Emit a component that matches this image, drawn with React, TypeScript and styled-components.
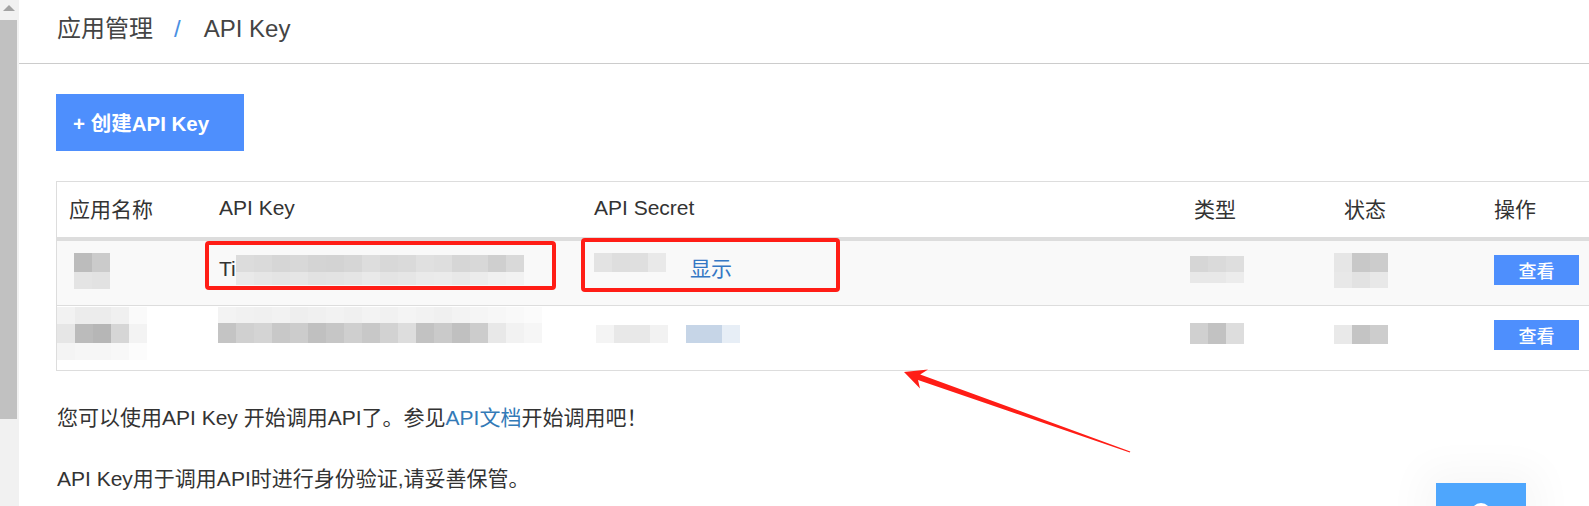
import React from "react";
import styled, { createGlobalStyle } from "styled-components";

const GlobalStyle = createGlobalStyle`
  html, body {
    margin: 0;
    padding: 0;
    background: #ffffff;
    overflow: hidden;
  }
  body {
    font-family: "Liberation Sans", Arial, "Noto Sans CJK SC", sans-serif;
    color: #333333;
  }
  * { box-sizing: border-box; }
`;

const Page = styled.div`
  position: relative;
  display: flex;
  width: 1589px;
  height: 506px;
  overflow: hidden;
  background: #ffffff;
`;

const ScrollStrip = styled.div`
  flex: none;
  width: 19px;
  height: 100%;
  background: #f1f1f1;
  display: flex;
  flex-direction: column;
`;

const ScrollArrow = styled.div`
  height: 20px;
  width: 17px;
  display: flex;
  align-items: center;
  justify-content: center;
  padding-bottom: 5px;
  &::before {
    content: "";
    border-left: 6px solid transparent;
    border-right: 6px solid transparent;
    border-bottom: 6px solid #a3a3a3;
  }
`;

const ScrollThumb = styled.div`
  width: 17px;
  height: 399px;
  background: #c1c1c1;
`;

const Main = styled.div`
  flex: 1;
  min-width: 0;
  display: flex;
  flex-direction: column;
`;

const Header = styled.div`
  height: 64px;
  border-bottom: 1px solid #cccccc;
  padding: 0 0 6px 38px;
  display: flex;
  align-items: center;
  font-size: 24px;
  color: #444444;
`;

const Crumb = styled.span`
  line-height: 30px;
`;

const CrumbSep = styled.span`
  color: #4a90e2;
  margin: 0 23px 0 21px;
  line-height: 30px;
`;

const Content = styled.div`
  padding: 30px 0 0 37px;
  display: flex;
  flex-direction: column;
  align-items: flex-start;
`;

const CreateButton = styled.button`
  width: 188px;
  height: 57px;
  border: none;
  background: #4e8ffd;
  color: #ffffff;
  font-family: "Liberation Sans", Arial, "Noto Sans CJK SC", sans-serif;
  font-size: 20.5px;
  font-weight: bold;
  text-align: left;
  padding: 0 0 2px 17px;
  cursor: pointer;
`;

const Table = styled.div`
  margin-top: 30px;
  width: 1577px;
  flex: none;
  border: 1px solid #dddddd;
`;

const Row = styled.div<{ $head?: boolean; $alt?: boolean; $last?: boolean }>`
  display: grid;
  grid-template-columns: 150px 375px 600px 150px 150px 150px;
  height: ${(p) => (p.$head ? 59 : p.$last ? 64 : 65)}px;
  background: ${(p) => (p.$alt ? "#f9f9f9" : "#ffffff")};
  border-bottom: ${(p) =>
    p.$head ? "4px solid #dddddd" : p.$last ? "none" : "1px solid #dddddd"};
`;

const HeadCell = styled.div`
  padding: 0 12px 4px;
  display: flex;
  align-items: center;
  font-size: 21px;
  color: #333333;
  white-space: nowrap;
`;

const Cell = styled.div`
  padding: 0 12px;
  display: flex;
  align-items: flex-start;
  font-size: 21px;
  color: #333333;
  white-space: nowrap;
`;

const CellText = styled.span`
  margin-top: 13px;
  line-height: 30px;
`;

const ShowLink = styled.a`
  margin: 13px 0 0 24px;
  line-height: 30px;
  color: #3477c4;
  text-decoration: none;
  cursor: pointer;
`;

const ViewButton = styled.button`
  margin-top: 14px;
  width: 85px;
  height: 30px;
  border: none;
  background: #4e8ffd;
  color: #ffffff;
  font-family: "Liberation Sans", Arial, "Noto Sans CJK SC", sans-serif;
  font-size: 18px;
  font-weight: 500;
  padding: 0;
  cursor: pointer;
`;

const MosaicGrid = styled.div<{ $cell: number; $cols: number; $mt: number; $ml: number }>`
  flex: none;
  display: grid;
  grid-template-columns: repeat(${(p) => p.$cols}, ${(p) => p.$cell}px);
  margin-top: ${(p) => p.$mt}px;
  margin-left: ${(p) => p.$ml}px;
`;

const Pixel = styled.span<{ $c: string; $h: number }>`
  display: block;
  height: ${(p) => p.$h}px;
  background: ${(p) => p.$c};
`;

type MosaicRow = { h: number; c: string[] };

const Mosaic: React.FC<{ rows: MosaicRow[]; mt?: number; ml?: number; cell?: number }> = ({
  rows,
  mt = 0,
  ml = 0,
  cell = 18,
}) => (
  <MosaicGrid $cell={cell} $cols={rows[0].c.length} $mt={mt} $ml={ml} aria-hidden>
    {rows.map((r, i) => r.c.map((c, j) => <Pixel key={`${i}-${j}`} $c={c} $h={r.h} />))}
  </MosaicGrid>
);

const Notes = styled.div`
  margin: 32px 0 0 1px;
  display: flex;
  flex-direction: column;
  gap: 31px;
  font-size: 21px;
  color: #333333;
`;

const Note = styled.p`
  margin: 0;
  line-height: 30px;
  white-space: nowrap;
`;

const DocLink = styled.a`
  color: #337ab7;
  text-decoration: none;
`;

const RedBox = styled.div<{ $x: number; $y: number; $w: number; $h: number }>`
  position: absolute;
  left: ${(p) => p.$x}px;
  top: ${(p) => p.$y}px;
  width: ${(p) => p.$w}px;
  height: ${(p) => p.$h}px;
  border: 4px solid #ff1d16;
  border-radius: 4px;
  pointer-events: none;
`;

const ArrowLayer = styled.svg`
  position: absolute;
  left: 0;
  top: 0;
  pointer-events: none;
`;

const FloatWidget = styled.div`
  position: absolute;
  left: 1436px;
  top: 483px;
  width: 90px;
  height: 60px;
  background: #4ea6fd;
  box-shadow: 0 0 40px 14px rgba(0, 0, 0, 0.035);
  display: flex;
  justify-content: center;
  padding-top: 20px;
`;

const WidgetDot = styled.span`
  width: 20px;
  height: 20px;
  border-radius: 50%;
  background: #ffffff;
`;

export default function App() {
  return (
    <>
      <GlobalStyle />
      <Page>
        <ScrollStrip>
          <ScrollArrow />
          <ScrollThumb />
        </ScrollStrip>
        <Main>
          <Header>
            <Crumb>应用管理</Crumb>
            <CrumbSep>/</CrumbSep>
            <Crumb>API Key</Crumb>
          </Header>
          <Content>
            <CreateButton>+ 创建API Key</CreateButton>
            <Table>
              <Row $head>
                <HeadCell>应用名称</HeadCell>
                <HeadCell>API Key</HeadCell>
                <HeadCell>API Secret</HeadCell>
                <HeadCell>类型</HeadCell>
                <HeadCell>状态</HeadCell>
                <HeadCell>操作</HeadCell>
              </Row>
              <Row $alt>
                <Cell>
                  <Mosaic
                    mt={12}
                    ml={5}
                    rows={[
                      { h: 19, c: ["#bcbcbc", "#cbcbcb"] },
                      { h: 17, c: ["#e4e4e4", "#e2e2e2"] },
                    ]}
                  />
                </Cell>
                <Cell>
                  <CellText>Ti</CellText>
                  <Mosaic
                    mt={14}
                    rows={[
                      {
                        h: 17,
                        c: ["#dcdcdc", "#dadada", "#d6d6d6", "#d8d8d8", "#d4d4d4", "#d3d3d3", "#d6d6d6", "#dddddd", "#d8d8d8", "#dadada", "#e0e0e0", "#dedede", "#d6d6d6", "#d8d8d8", "#cfcfcf", "#d9d9d9"],
                      },
                      {
                        h: 13,
                        c: ["#e9e9e9", "#e6e6e6", "#e4e4e4", "#e6e6e6", "#e2e2e2", "#e3e3e3", "#e5e5e5", "#e9e9e9", "#e4e4e4", "#e6e6e6", "#eaeaea", "#ebebeb", "#e8e8e8", "#ececec", "#f0f0f0", "#f2f2f2"],
                      },
                    ]}
                  />
                </Cell>
                <Cell>
                  <Mosaic mt={12} rows={[{ h: 19, c: ["#e3e3e3", "#dedede", "#dfdfdf", "#e9e9e9"] }]} />
                  <ShowLink>显示</ShowLink>
                </Cell>
                <Cell>
                  <Mosaic
                    mt={15}
                    ml={-4}
                    rows={[
                      { h: 16, c: ["#d6d6d6", "#dadada", "#dedede"] },
                      { h: 11, c: ["#e8e8e8", "#e8e8e8", "#ececec"] },
                    ]}
                  />
                </Cell>
                <Cell>
                  <Mosaic
                    mt={12}
                    ml={-10}
                    rows={[
                      { h: 19, c: ["#e6e6e6", "#c8c8c8", "#cccccc"] },
                      { h: 16, c: ["#e8e8e8", "#e2e2e2", "#e8e8e8"] },
                    ]}
                  />
                </Cell>
                <Cell>
                  <ViewButton>查看</ViewButton>
                </Cell>
              </Row>
              <Row $last>
                <Cell>
                  <Mosaic
                    mt={1}
                    ml={-12}
                    rows={[
                      { h: 17, c: ["#f2f2f2", "#ececec", "#ececec", "#f0f0f0", "#fafafa"] },
                      { h: 19, c: ["#e6e6e6", "#bbbbbb", "#b6b6b6", "#d6d6d6", "#f3f3f3"] },
                      { h: 17, c: ["#f4f4f4", "#f6f6f6", "#f6f6f6", "#f8f8f8", "#fcfcfc"] },
                    ]}
                  />
                </Cell>
                <Cell>
                  <Mosaic
                    mt={1}
                    ml={-1}
                    rows={[
                      {
                        h: 16,
                        c: ["#f3f3f3", "#f1f1f1", "#f0f0f0", "#f2f2f2", "#eeeeee", "#f0f0f0", "#f2f2f2", "#f0f0f0", "#f3f3f3", "#f1f1f1", "#f4f4f4", "#f2f2f2", "#f0f0f0", "#f3f3f3", "#f5f5f5", "#f7f7f7", "#f9f9f9", "#fbfbfb"],
                      },
                      {
                        h: 20,
                        c: ["#c4c4c4", "#d0d0d0", "#d4d4d4", "#c8c8c8", "#cccccc", "#c0c0c0", "#c6c6c6", "#cfcfcf", "#c8c8c8", "#d2d2d2", "#dddddd", "#c2c2c2", "#cacaca", "#c0c0c0", "#cccccc", "#e8e8e8", "#f2f2f2", "#f6f6f6"],
                      },
                    ]}
                  />
                </Cell>
                <Cell>
                  <Mosaic mt={19} ml={2} rows={[{ h: 18, c: ["#f4f4f4", "#e8e8e8", "#e8e8e8", "#f2f2f2"] }]} />
                  <Mosaic mt={19} ml={18} rows={[{ h: 18, c: ["#c6d5e7", "#c6d5e7", "#e7eef6"] }]} />
                </Cell>
                <Cell>
                  <Mosaic mt={17} ml={-4} rows={[{ h: 21, c: ["#d0d0d0", "#c2c2c2", "#dddddd"] }]} />
                </Cell>
                <Cell>
                  <Mosaic mt={19} ml={-10} rows={[{ h: 19, c: ["#e9e9e9", "#c4c4c4", "#cdcdcd"] }]} />
                </Cell>
                <Cell>
                  <ViewButton>查看</ViewButton>
                </Cell>
              </Row>
            </Table>
            <Notes>
              <Note>
                您可以使用API Key 开始调用API了。参见<DocLink>API文档</DocLink>开始调用吧！
              </Note>
              <Note>API Key用于调用API时进行身份验证,请妥善保管。</Note>
            </Notes>
          </Content>
        </Main>

        <RedBox $x={205} $y={241} $w={351} $h={49} />
        <RedBox $x={581} $y={238} $w={259} $h={54} />
        <ArrowLayer width={1589} height={506} viewBox="0 0 1589 506">
          <polygon
            points="904,372 928,369.5 920.2,374.6 1130.3,451.4 1129.8,452.6 918,380 920,388.5"
            fill="#ff1d16"
          />
        </ArrowLayer>
        <FloatWidget>
          <WidgetDot />
        </FloatWidget>
      </Page>
    </>
  );
}
